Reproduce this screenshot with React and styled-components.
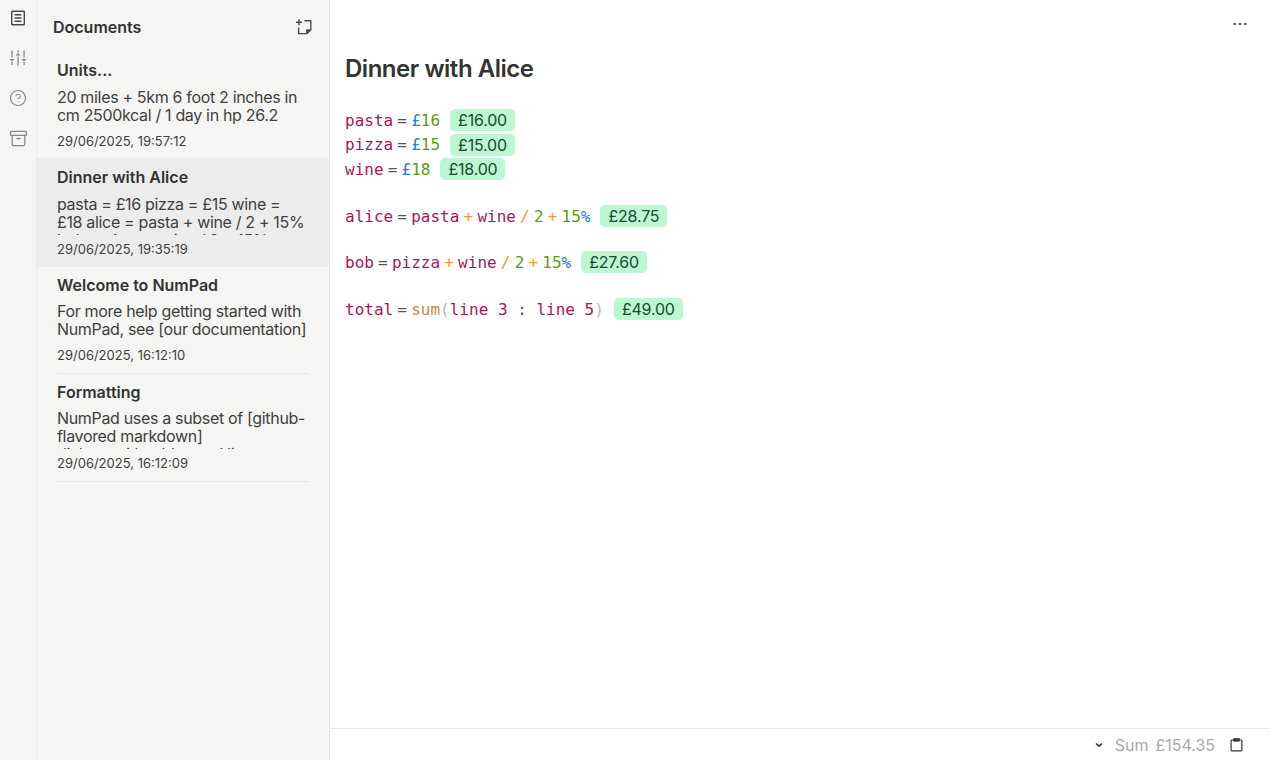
import styled, { createGlobalStyle } from 'styled-components';
import { Archive, CircleHelp, Ellipsis } from 'lucide-react';

const GlobalStyle = createGlobalStyle`
  html, body {
    margin: 0;
    height: 100%;
    overflow: hidden;
    background: #fff;
  }
  #root {
    height: 100%;
  }
`;

const Page = styled.div`
  display: flex;
  height: 760px;
  font-family: Inter, "Liberation Sans", sans-serif;
  color: #333;
`;

const Rail = styled.nav`
  display: flex;
  flex-direction: column;
  align-items: center;
  gap: 20px;
  width: 37px;
  flex: none;
  padding-top: 8px;
  box-sizing: border-box;
  background: #f5f5f3;
  border-right: 1px solid #ebebea;
`;

const RailButton = styled.div`
  display: flex;
  align-items: center;
  justify-content: center;
  width: 20px;
  height: 20px;
  color: ${(p) => (p.$active ? '#4a4a4a' : '#868686')};
`;

const Sidebar = styled.aside`
  width: 293px;
  flex: none;
  box-sizing: border-box;
  background: #f5f5f3;
  border-right: 1px solid #e6e6e5;
`;

const SidebarHeader = styled.header`
  display: flex;
  align-items: center;
  justify-content: space-between;
  height: 54px;
  padding: 0 16px;
  color: #4a4a4a;
`;

const SidebarTitle = styled.h2`
  margin: 0 0 1px;
  font-size: 16px;
  font-weight: 600;
  color: #333;
`;

const DocItem = styled.div`
  padding-left: 20px;
  background: ${(p) => (p.$selected ? '#ececec' : 'transparent')};
`;

const DocInner = styled.div`
  box-sizing: border-box;
  width: 252px;
  height: ${(p) => p.$height}px;
  padding-top: ${(p) => p.$top}px;
  border-bottom: 1px solid ${(p) => (p.$line ? '#e8e8e7' : 'transparent')};
`;

const DocTitle = styled.div`
  font-size: 16px;
  font-weight: 600;
  line-height: 20px;
  color: #333;
`;

const DocPreview = styled.div`
  height: 39.5px;
  margin-top: ${(p) => p.$gap}px;
  overflow: hidden;
  font-size: 16px;
  line-height: 18px;
  letter-spacing: -0.33px;
  white-space: pre-line;
  color: #3f3f3f;
`;

const DocDate = styled.div`
  margin-top: ${(p) => p.$gap}px;
  font-size: 13px;
  line-height: 16px;
  color: #3f3f3f;
`;

const Main = styled.main`
  display: flex;
  flex-direction: column;
  flex: 1;
  min-width: 0;
`;

const TopBar = styled.div`
  display: flex;
  justify-content: flex-end;
  align-items: center;
  height: 48px;
  padding-right: 21px;
  color: #555;
`;

const Editor = styled.div`
  flex: 1;
  padding: 5px 15px 0;
`;

const Heading = styled.h1`
  margin: 0 0 23px;
  font-size: 24px;
  line-height: 32px;
  font-weight: 600;
  letter-spacing: -0.02em;
  color: #333;
`;

const Line = styled.div`
  display: flex;
  align-items: center;
  height: 24.5px;
  font-family: "DejaVu Sans Mono", "Liberation Mono", monospace;
  font-size: 16px;
  white-space: pre;
`;

const Blank = styled.div`
  height: ${(p) => p.$h}px;
`;

const Tok = styled.span`
  color: ${(p) => p.$c};
`;

const Op = styled.span`
  margin: 0 4.2px;
  color: ${(p) => p.$c || '#f39a1f'};
`;

const Answer = styled.span`
  display: inline-block;
  margin-left: 10px;
  padding: 0 8px;
  height: 22px;
  line-height: 22px;
  border-radius: 5px;
  background: #bbf7d0;
  color: #1a4a2f;
  font-family: Inter, "Liberation Sans", sans-serif;
  font-size: 16px;
  letter-spacing: -0.2px;
`;

const Footer = styled.footer`
  display: flex;
  align-items: center;
  justify-content: flex-end;
  height: 31px;
  padding-right: 27px;
  border-top: 1px solid #ebebeb;
  color: #333;
`;

const Chevron = styled.span`
  display: flex;
  margin-right: 12px;
`;

const SumText = styled.span`
  display: flex;
  gap: 7px;
  margin-right: 15px;
  font-size: 16px;
  color: #aaa;
`;

const VAR = '#a3195b';
const UNIT = '#2b7fc0';
const NUM = '#5f9a0e';
const EQ = '#555';

const docs = [
  {
    title: 'Units...',
    preview: '20 miles + 5km 6 foot 2 inches in cm 2500kcal / 1 day in hp 26.2',
    date: '29/06/2025, 19:57:12',
    height: 104,
    top: 6,
    previewGap: 8,
    dateGap: 5.5,
  },
  {
    title: 'Dinner with Alice',
    preview: 'pasta = £16 pizza = £15 wine = £18 alice = pasta + wine / 2 + 15% bob = pizza + wine / 2 + 15%',
    date: '29/06/2025, 19:35:19',
    height: 109,
    top: 9,
    previewGap: 8,
    dateGap: 6,
    selected: true,
  },
  {
    title: 'Welcome to NumPad',
    preview: 'For more help getting started with NumPad, see [our documentation]',
    date: '29/06/2025, 16:12:10',
    height: 107,
    top: 8,
    previewGap: 7,
    dateGap: 5.5,
    line: true,
  },
  {
    title: 'Formatting',
    preview: 'NumPad uses a subset of [github-flavored markdown]\ndialect, with tables and lists',
    date: '29/06/2025, 16:12:09',
    height: 108,
    top: 8,
    previewGap: 7,
    dateGap: 6.5,
    line: true,
  },
];

const Money = ({ v }) => (
  <>
    <Tok $c={UNIT}>£</Tok>
    <Tok $c={NUM}>{v}</Tok>
  </>
);

const Shared = ({ first }) => (
  <>
    <Tok $c={VAR}>{first}</Tok>
    <Op>+</Op>
    <Tok $c={VAR}>wine</Tok>
    <Op>/</Op>
    <Tok $c={NUM}>2</Tok>
    <Op>+</Op>
    <Tok $c={NUM}>15</Tok>
    <Tok $c={UNIT}>%</Tok>
  </>
);

const Name = ({ n }) => (
  <>
    <Tok $c={VAR}>{n}</Tok>
    <Op $c={EQ}>=</Op>
  </>
);

const DocListIcon = () => (
  <svg width="16" height="16" viewBox="0 0 16 16" fill="none" stroke="currentColor" strokeWidth="1.4">
    <rect x="1.7" y="1.2" width="12.6" height="13.6" rx="0.6" />
    <path d="M4.6 4.8h6.8M4.6 8h6.8M4.6 11.2h6.8" />
  </svg>
);

const SlidersIcon = () => (
  <svg width="18" height="16" viewBox="0 0 18 16" fill="currentColor" stroke="none">
    <rect x="2.4" y="0.5" width="1.3" height="7" />
    <path d="M0.6 9h4.9L3 11.5z" />
    <rect x="2.4" y="12" width="1.3" height="3" />
    <rect x="8.4" y="0.5" width="1.3" height="2" />
    <path d="M6.6 5.5h4.9L9 3z" />
    <rect x="8.4" y="6.5" width="1.3" height="9" />
    <rect x="14.4" y="0.5" width="1.3" height="7" />
    <path d="M12.6 9h4.9L15 11.5z" />
    <rect x="14.4" y="12" width="1.3" height="3" />
  </svg>
);

const NewNoteIcon = () => (
  <svg width="18" height="18" viewBox="0 0 18 18" fill="none" stroke="currentColor" strokeWidth="1.4">
    <path d="M4 1.2v6M1 4.2h6" />
    <path d="M9.5 2.8h6.3v9l-3.8 3.8H3.6V9.5" />
    <path d="M11.5 15.5v-3.8h4.2z" fill="currentColor" strokeWidth="0.8" />
  </svg>
);

const ChevronIcon = () => (
  <svg width="8" height="6" viewBox="0 0 8 6" fill="none" stroke="currentColor" strokeWidth="1.6">
    <path d="M1 1.5l3 2.6 3-2.6" />
  </svg>
);

const ClipboardIcon = () => (
  <svg width="13" height="14" viewBox="0 0 13 14" fill="none" stroke="currentColor" strokeWidth="1.2">
    <rect x="1.1" y="2" width="10.8" height="10.8" rx="0.8" />
    <rect x="3.7" y="0.6" width="5.6" height="2.6" fill="currentColor" strokeWidth="0.6" />
  </svg>
);

const App = () => (
  <Page>
    <GlobalStyle />
    <Rail>
      <RailButton $active><DocListIcon /></RailButton>
      <RailButton><SlidersIcon /></RailButton>
      <RailButton><CircleHelp size={18} strokeWidth={1.6} /></RailButton>
      <RailButton><Archive size={19} strokeWidth={1.6} /></RailButton>
    </Rail>
    <Sidebar>
      <SidebarHeader>
        <SidebarTitle>Documents</SidebarTitle>
        <NewNoteIcon />
      </SidebarHeader>
      {docs.map((d) => (
        <DocItem key={d.title} $selected={d.selected}>
          <DocInner $height={d.height} $top={d.top} $line={d.line}>
            <DocTitle>{d.title}</DocTitle>
            <DocPreview $gap={d.previewGap}>{d.preview}</DocPreview>
            <DocDate $gap={d.dateGap}>{d.date}</DocDate>
          </DocInner>
        </DocItem>
      ))}
    </Sidebar>
    <Main>
      <TopBar><Ellipsis size={18} strokeWidth={1.5} /></TopBar>
      <Editor>
        <Heading>Dinner with Alice</Heading>
        <Line><Name n="pasta" /><Money v="16" /><Answer>£16.00</Answer></Line>
        <Line><Name n="pizza" /><Money v="15" /><Answer>£15.00</Answer></Line>
        <Line><Name n="wine" /><Money v="18" /><Answer>£18.00</Answer></Line>
        <Blank $h={22.5} />
        <Line><Name n="alice" /><Shared first="pasta" /><Answer>£28.75</Answer></Line>
        <Blank $h={21.5} />
        <Line><Name n="bob" /><Shared first="pizza" /><Answer>£27.60</Answer></Line>
        <Blank $h={22.5} />
        <Line>
          <Name n="total" />
          <Tok $c="#c98a4a">sum</Tok>
          <Tok $c="#bbb">(</Tok>
          <Tok $c={VAR}>line 3 </Tok>
          <Tok $c={EQ}>:</Tok>
          <Tok $c={VAR}> line 5</Tok>
          <Tok $c="#bbb">)</Tok>
          <Answer>£49.00</Answer>
        </Line>
      </Editor>
      <Footer>
        <Chevron><ChevronIcon /></Chevron>
        <SumText><span>Sum</span><span>£154.35</span></SumText>
        <ClipboardIcon />
      </Footer>
    </Main>
  </Page>
);

export default App;
